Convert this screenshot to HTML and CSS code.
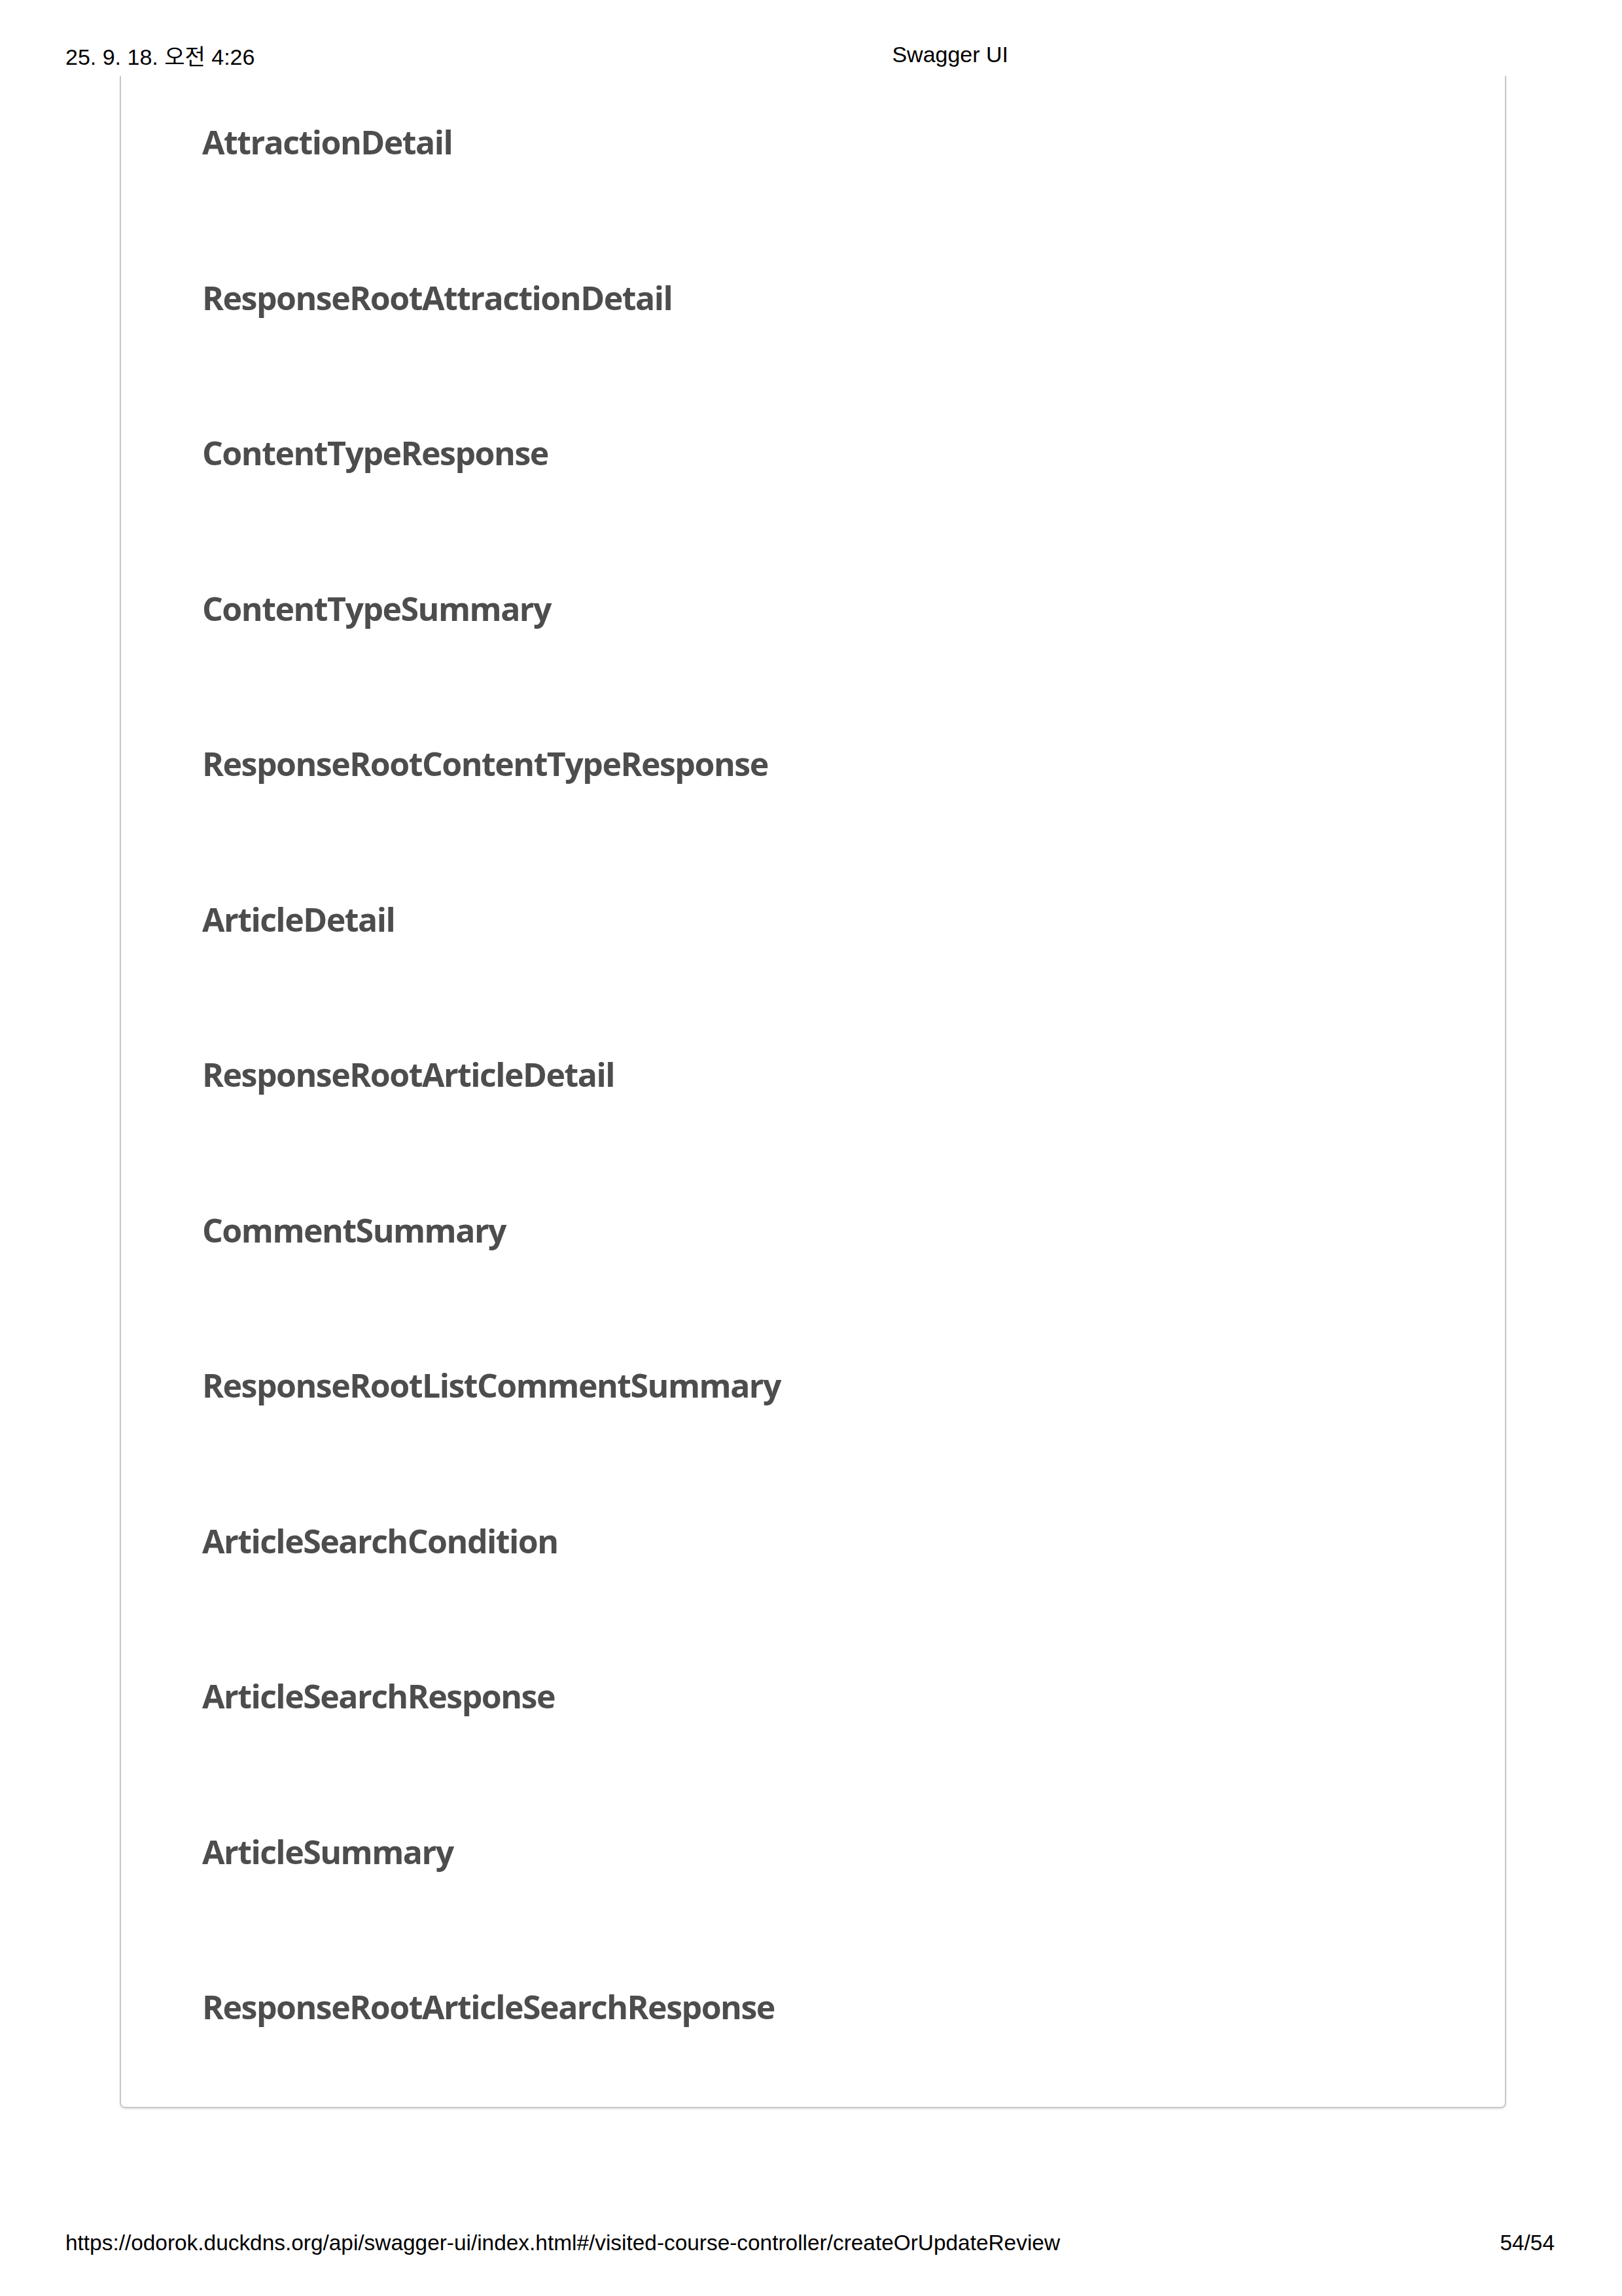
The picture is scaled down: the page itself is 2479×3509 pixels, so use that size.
FILE: index.html
```html
<!DOCTYPE html>
<html lang="ko">
<head>
<meta charset="utf-8">
<title>Swagger UI</title>
<link rel="stylesheet" href="styles.css">
</head>
<body>
<div class="page">
  <header class="print-header">
    <span class="print-date">25. 9. 18. 오전 4:26</span>
    <span class="print-title">Swagger UI</span>
  </header>
  <section class="models">
    <div class="model-title">AttractionDetail</div>
    <div class="model-title">ResponseRootAttractionDetail</div>
    <div class="model-title">ContentTypeResponse</div>
    <div class="model-title">ContentTypeSummary</div>
    <div class="model-title">ResponseRootContentTypeResponse</div>
    <div class="model-title">ArticleDetail</div>
    <div class="model-title">ResponseRootArticleDetail</div>
    <div class="model-title">CommentSummary</div>
    <div class="model-title">ResponseRootListCommentSummary</div>
    <div class="model-title">ArticleSearchCondition</div>
    <div class="model-title">ArticleSearchResponse</div>
    <div class="model-title">ArticleSummary</div>
    <div class="model-title">ResponseRootArticleSearchResponse</div>
  </section>
  <footer class="print-footer">
    <span class="print-url">https://odorok.duckdns.org/api/swagger-ui/index.html#/visited-course-controller/createOrUpdateReview</span>
    <span class="print-page">54/54</span>
  </footer>
</div>
</body>
</html>
```

FILE: styles.css
```css
html, body {
  margin: 0;
  padding: 0;
  background: #ffffff;
}

.page {
  width: 2479px;
  height: 3509px;
  display: flex;
  flex-direction: column;
  font-family: "Liberation Sans", Arial, "Noto Sans CJK KR", sans-serif;
  color: #000;
}

.print-header {
  display: flex;
  align-items: flex-start;
  height: 53px;
  padding: 63px 0 0 100px;
  box-sizing: content-box;
  font-size: 33.5px;
  line-height: 40px;
}

.print-date {
  margin-top: 4px;
  font-size: 34px;
  font-family: "Liberation Sans", "Noto Sans CJK KR", sans-serif;
}

.print-title {
  margin-left: 974px;
  font-size: 34px;
}

.models {
  margin: 0 177px 0 183px;
  border: 2px solid #c6c6cc;
  border-top: none;
  border-radius: 0 0 8px 8px;
  box-shadow: 0 2px 3px rgba(0, 0, 0, 0.08);
  padding: 71px 0 123px 124px;
  display: flex;
  flex-direction: column;
  gap: 177.5px;
}

.model-title {
  font-family: "Open Sans", "Noto Sans", sans-serif;
  font-weight: 700;
  font-size: 50px;
  line-height: 60px;
  color: #4d4d4d;
  letter-spacing: -1.5px;
}

.print-footer {
  display: flex;
  justify-content: space-between;
  margin-top: 186px;
  padding: 0 103px 0 100px;
  font-size: 33.4px;
  line-height: 40px;
}
```
